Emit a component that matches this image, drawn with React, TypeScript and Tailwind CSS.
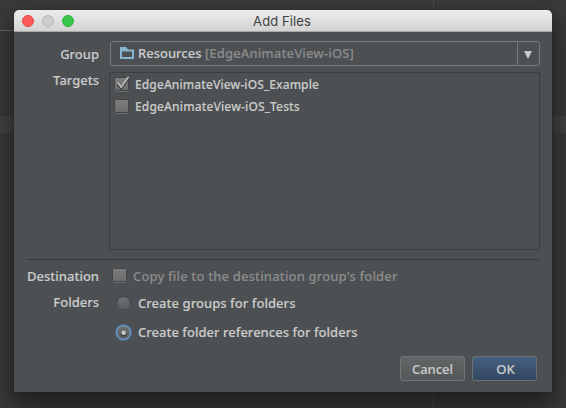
import type { ReactNode } from 'react';

function Text({ children, className = '' }: { children: ReactNode; className?: string }) {
  return <span className={`whitespace-pre leading-[18px] [-webkit-text-stroke:0.15px] ${className}`}>{children}</span>;
}

function RowLabel({ children, className = '' }: { children: ReactNode; className?: string }) {
  return (
    <div className={`flex w-[85px] shrink-0 justify-end ${className}`}>
      <Text>{children}</Text>
    </div>
  );
}

function CheckBox({ checked = false }: { checked?: boolean }) {
  return (
    <svg width="16" height="17" viewBox="0 0 16 17" className="shrink-0 overflow-visible">
      <defs>
        <linearGradient id="box" x1="0" y1="0" x2="0" y2="1">
          <stop offset="0" stopColor="#7d7d7d" />
          <stop offset="1" stopColor="#6c6c6c" />
        </linearGradient>
      </defs>
      <rect x="0.5" y="2.5" width="14" height="13" rx="1.5" fill="none" stroke="#6a6e6f" />
      <rect x="0.5" y="1.5" width="14" height="13" rx="1.5" fill="url(#box)" stroke="#434546" />
      {checked && (
        <>
          <path d="M3.7 7.8 L7.2 12.6 L14.5 2.2" fill="none" stroke="#303030" strokeWidth="2" />
          <path d="M3.5 6.2 L7.2 11.2 L14.6 0.8" fill="none" stroke="#bdbdbd" strokeWidth="1.7" />
        </>
      )}
    </svg>
  );
}

function Radio({ checked = false }: { checked?: boolean }) {
  return (
    <svg width="17" height="17" viewBox="0 0 17 17" className="shrink-0 overflow-visible">
      <defs>
        <linearGradient id="dial" x1="0" y1="0" x2="0" y2="1">
          <stop offset="0" stopColor="#6d7172" />
          <stop offset="1" stopColor="#5a5e60" />
        </linearGradient>
      </defs>
      {checked ? (
        <>
          <circle cx="8.5" cy="8.5" r="7.7" fill="none" stroke="#4c6a86" strokeWidth="2" />
          <circle cx="8.5" cy="8.5" r="6.9" fill="url(#dial)" stroke="#6b98be" strokeWidth="1.4" />
          <circle cx="8.7" cy="9.6" r="2.8" fill="#333637" />
          <circle cx="8.7" cy="8.8" r="2.4" fill="#c5c5c5" />
        </>
      ) : (
        <>
          <circle cx="8.5" cy="9.1" r="6.9" fill="none" stroke="#65696a" />
          <circle cx="8.5" cy="8.3" r="6.9" fill="url(#dial)" stroke="#3b3e40" />
        </>
      )}
    </svg>
  );
}

export default function App() {
  return (
    <div className="relative h-[408px] w-[566px] overflow-hidden bg-[#3a3a3a] font-['Noto_Sans','Open_Sans',sans-serif] text-[13px] font-medium text-[#cacaca]">
      <div className="absolute left-0 top-[30px] h-px w-[14px] bg-[#626262]" />
      <div className="absolute inset-x-0 top-[116px] h-[17px] bg-[#424242]" />
      <div className="absolute inset-y-0 left-[433px] w-px bg-[#4a4a4a]" />
      <div className="absolute left-[14px] top-[10px] flex h-[382px] w-[538px] flex-col rounded-t-[5px] bg-[#4c5052] shadow-[0_12px_26px_2px_rgba(0,0,0,0.5),0_0_1px_rgba(0,0,0,0.8)]">
        <header className="relative flex h-[22px] shrink-0 items-center justify-center rounded-t-[5px] border-b border-[#a9a9a9] bg-linear-to-b from-[#ededed] to-[#d2d2d2]">
          <div className="absolute left-[8px] top-[5px] flex gap-[8px]">
            <i className="size-[12px] rounded-full border border-[#e2463f] bg-[#fc5b57]" />
            <i className="size-[12px] rounded-full border border-[#b8b8b8] bg-[#cecece]" />
            <i className="size-[12px] rounded-full border border-[#2fae3a] bg-[#3ac84c]" />
          </div>
          <h1 className="mr-[2px] font-[Inter,sans-serif] text-[13px] font-normal leading-[18px] tracking-[0.1px] text-[#404040]">Add Files</h1>
        </header>

        <section className="mt-[9px] flex h-[25px] shrink-0">
          <RowLabel className="pt-[4px]">Group</RowLabel>
          <div className="ml-[11px] flex w-[430px] rounded-[3px] border border-[#777a7b]">
            <div className="flex flex-1 items-center pb-[1px] pl-[9px]">
              <svg width="14" height="12" viewBox="0 0 14 12" className="mr-[4px]">
                <path d="M0 0h6l2 2.5h6V12H0zM2 4.5v5.5h10V4.5z" fill="#87b4d0" fillRule="evenodd" />
              </svg>
              <Text>Resources </Text>
              <Text className="tracking-[0.15px] text-[#8b8b8b]">[EdgeAnimateView-iOS]</Text>
            </div>
            <div className="flex w-[22px] items-center justify-center border-l border-[#777a7b] pr-[1px] pt-[2px]">
              <svg width="8" height="8" viewBox="0 0 8 8">
                <path d="M0 0h8L4 8z" fill="#c9c9c9" />
              </svg>
            </div>
          </div>
        </section>

        <section className="mt-[6px] flex h-[178px] shrink-0">
          <RowLabel className="-mt-[1px]">Targets</RowLabel>
          <div className="ml-[10px] w-[431px] border border-[#3c3e3f] pl-[4px] pt-[3px] text-[12px]">
            <div className="flex h-[22px] items-start gap-[5px]">
              <CheckBox checked />
              <Text className="tracking-[0.11px]">EdgeAnimateView-iOS_Example</Text>
            </div>
            <div className="flex h-[22px] items-start gap-[5px]">
              <CheckBox />
              <Text className="tracking-[0.15px]">EdgeAnimateView-iOS_Tests</Text>
            </div>
          </div>
        </section>

        <hr className="ml-[13px] mt-[9px] w-[512px] border-[#34383a]" />

        <section className="mt-[7px] flex h-[20px] shrink-0 items-start">
          <RowLabel>Destination</RowLabel>
          <div className="ml-[13px] flex gap-[5px] text-[#8b8b8b]">
            <CheckBox />
            <Text className="tracking-[0.16px]">Copy file to the destination group's folder</Text>
          </div>
        </section>

        <section className="mt-[7px] flex shrink-0 items-start">
          <RowLabel className="-mt-[1px]">Folders</RowLabel>
          <div className="ml-[16px] flex flex-col gap-[11px]">
            <div className="flex h-[18px] items-center gap-[6px]">
              <Radio />
              <Text className="tracking-[0.05px]">Create groups for folders</Text>
            </div>
            <div className="flex h-[18px] items-center gap-[6px]">
              <Radio checked />
              <Text className="tracking-[0.02px]">Create folder references for folders</Text>
            </div>
          </div>
        </section>

        <footer className="mb-[11px] mr-[15px] mt-auto flex justify-end gap-[7px]">
          <button className="flex h-[25px] w-[65px] items-center justify-center rounded-[3px] border border-[#737677] bg-linear-to-b from-[#626667] to-[#535859]">
            <Text>Cancel</Text>
          </button>
          <button className="flex h-[25px] w-[65px] items-center justify-center rounded-[3px] border border-[#6b7073] bg-linear-to-b from-[#466080] to-[#324760] pl-[2px]">
            <Text>OK</Text>
          </button>
        </footer>
      </div>
    </div>
  );
}
